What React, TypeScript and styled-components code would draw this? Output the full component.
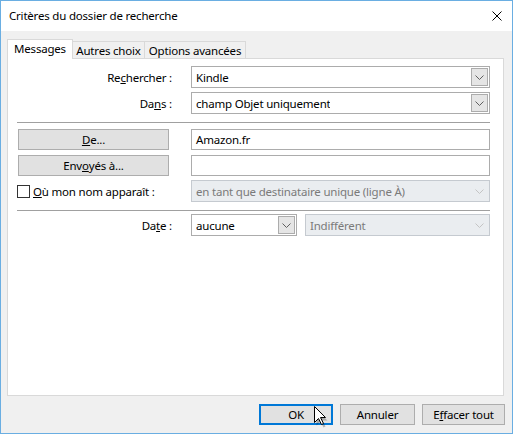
import styled, { createGlobalStyle } from "styled-components";

const GlobalStyle = createGlobalStyle`
  html, body {
    margin: 0;
    padding: 0;
    background: #ffffff;
  }
  * {
    box-sizing: border-box;
  }
`;

const Chevron = ({ color = "#5f5f5f" }: { color?: string }) => (
  <svg width="9" height="5" viewBox="0 0 9 5">
    <path d="M0.5 0.5 L4.5 4.5 L8.5 0.5" fill="none" stroke={color} strokeWidth="1" />
  </svg>
);

const Combo = ({ value, disabled, width }: { value: string; disabled?: boolean; width?: number }) => (
  <ComboBox $disabled={disabled} $width={width}>
    <ComboText>{value}</ComboText>
    <DropButton $disabled={disabled}>
      <Chevron color={disabled ? "#c4c4c4" : "#5f5f5f"} />
    </DropButton>
  </ComboBox>
);

const App = () => {
  return (
    <>
      <GlobalStyle />
      <Window>
        <TitleBar>
          <Title>Critères du dossier de recherche</Title>
          <CloseIcon width="10" height="10" viewBox="0 0 10 10">
            <path d="M0.5 0.5 L9.5 9.5 M9.5 0.5 L0.5 9.5" stroke="#000" strokeWidth="1" />
          </CloseIcon>
        </TitleBar>

        <Body>
          <TabStrip>
            <Tab $active $width={66}>Messages</Tab>
            <Tab $width={73}>Autres choix</Tab>
            <Tab $width={102}>Options avancées</Tab>
          </TabStrip>

          <Panel>
            <Form>
              <Row $height={22}>
                <Label>Re<u>c</u>hercher :</Label>
                <Combo value="Kindle" />
              </Row>
              <Row $top={4} $height={22}>
                <Label>Da<u>n</u>s :</Label>
                <Combo value="champ Objet uniquement" />
              </Row>

              <Separator $top={8} />

              <Row $top={5} $height={21}>
                <Cell>
                  <FieldButton><u>D</u>e...</FieldButton>
                </Cell>
                <TextBox>Amazon.fr</TextBox>
              </Row>
              <Row $top={5} $height={21}>
                <Cell>
                  <FieldButton>Env<u>o</u>yés à...</FieldButton>
                </Cell>
                <TextBox />
              </Row>
              <Row $top={5} $height={22}>
                <CheckLabel>
                  <CheckBox />
                  <span><u>O</u>ù mon nom apparaît :</span>
                </CheckLabel>
                <Combo value="en tant que destinataire unique (ligne À)" disabled />
              </Row>

              <Separator $top={8} />

              <Row $top={3} $height={21}>
                <Label>Da<u>t</u>e :</Label>
                <DateFields>
                  <Combo value="aucune" width={106} />
                  <Combo value="Indifférent" disabled />
                </DateFields>
              </Row>
            </Form>
          </Panel>

          <Footer>
            <DialogButton $default $width={74}>OK</DialogButton>
            <DialogButton $width={75}>Annuler</DialogButton>
            <DialogButton $width={83}>E<u>f</u>facer tout</DialogButton>
          </Footer>
        </Body>

        <Cursor width="14" height="22" viewBox="0 0 14 22">
          <path d="M2.5 3.5 L2.5 19.5 L6.5 15.5 L9.5 21.5 L11.5 20.5 L8.5 14.5 L13.5 14.5 Z" fill="rgba(0,0,0,0.25)" />
          <path d="M0.5 0.5 L0.5 16.5 L4.5 12.5 L7.5 18.5 L9.5 17.5 L6.5 11.5 L11.5 11.5 Z" fill="#fff" stroke="#000" strokeWidth="1" strokeLinejoin="miter" />
        </Cursor>
      </Window>
    </>
  );
};

export default App;

const Window = styled.div`
  position: relative;
  width: 513px;
  height: 434px;
  border: 1px solid #6aaee2;
  background: #f0f0f0;
  display: flex;
  flex-direction: column;
  font-family: "Noto Sans", "Open Sans", sans-serif;
  font-size: 11.5px;
  letter-spacing: -0.2px;
  color: #000;
  overflow: hidden;
`;

const TitleBar = styled.div`
  height: 30px;
  background: #ffffff;
  display: flex;
  align-items: center;
  justify-content: space-between;
  padding: 0 10px 1px 8px;
`;

const Title = styled.span`
  font-size: 11.5px;
`;

const CloseIcon = styled.svg`
  display: block;
`;

const Body = styled.div`
  flex: 1;
  display: flex;
  flex-direction: column;
  padding: 8px 8px 0 6px;
`;

const TabStrip = styled.div`
  display: flex;
  align-items: flex-end;
  height: 19px;
`;

const Tab = styled.div<{ $active?: boolean; $width: number }>`
  position: relative;
  width: ${(p) => p.$width}px;
  height: ${(p) => (p.$active ? "20px" : "17px")};
  margin-bottom: ${(p) => (p.$active ? "-1px" : "0")};
  margin-left: ${(p) => (p.$active ? "0" : "-1px")};
  z-index: ${(p) => (p.$active ? 2 : 1)};
  background: ${(p) => (p.$active ? "#ffffff" : "#f0f0f0")};
  border: 1px solid #d9d9d9;
  border-bottom: none;
  display: flex;
  align-items: center;
  justify-content: center;
  padding-bottom: ${(p) => (p.$active ? "2px" : "0")};
  white-space: nowrap;
`;

const Panel = styled.div`
  height: 338px;
  background: #ffffff;
  border: 1px solid #d9d9d9;
`;

const Form = styled.div`
  display: flex;
  flex-direction: column;
  padding: 7px 13px 0 9px;
`;

const Row = styled.div<{ $top?: number; $height: number }>`
  display: grid;
  grid-template-columns: 174px 1fr;
  align-items: center;
  height: ${(p) => p.$height}px;
  margin-top: ${(p) => p.$top ?? 0}px;
`;

const Label = styled.div`
  text-align: right;
  padding-right: 19px;
  white-space: nowrap;
`;

const Cell = styled.div`
  display: flex;
  padding-left: 1px;
`;

const Separator = styled.div<{ $top: number }>`
  height: 1px;
  background: #a0a0a0;
  margin-top: ${(p) => p.$top}px;
`;

const ComboBox = styled.div<{ $disabled?: boolean; $width?: number }>`
  display: flex;
  align-items: center;
  justify-content: space-between;
  height: 22px;
  width: ${(p) => (p.$width ? `${p.$width}px` : "auto")};
  flex: ${(p) => (p.$width ? "none" : "1")};
  border: 1px solid ${(p) => (p.$disabled ? "#c5cad0" : "#acacac")};
  background: ${(p) => (p.$disabled ? "#eaedf0" : "#ffffff")};
  color: ${(p) => (p.$disabled ? "#7a7a7a" : "#000000")};
  padding: 0 1px 0 4px;
`;

const ComboText = styled.span`
  white-space: nowrap;
  overflow: hidden;
`;

const DropButton = styled.div<{ $disabled?: boolean }>`
  width: 17px;
  height: 18px;
  display: flex;
  align-items: center;
  justify-content: center;
  border: 1px solid ${(p) => (p.$disabled ? "transparent" : "#acacac")};
  background: ${(p) => (p.$disabled ? "transparent" : "#e5e5e5")};
`;

const TextBox = styled.div`
  height: 21px;
  border: 1px solid #acacac;
  background: #ffffff;
  display: flex;
  align-items: center;
  padding-left: 4px;
`;

const FieldButton = styled.div`
  width: 151px;
  height: 21px;
  border: 1px solid #adadad;
  background: #e1e1e1;
  display: flex;
  align-items: center;
  justify-content: center;
  margin-top: 1px;
`;

const CheckLabel = styled.label`
  display: flex;
  align-items: center;
  gap: 3px;
  white-space: nowrap;
`;

const CheckBox = styled.span`
  width: 13px;
  height: 13px;
  border: 1px solid #333333;
  background: #ffffff;
  display: inline-block;
`;

const DateFields = styled.div`
  display: flex;
  gap: 8px;
`;

const Footer = styled.div`
  display: flex;
  justify-content: flex-end;
  gap: 7px;
  padding: 8px 0 0 0;
  margin-right: -1px;
`;

const DialogButton = styled.div<{ $default?: boolean; $width: number }>`
  width: ${(p) => p.$width}px;
  height: 21px;
  border: ${(p) => (p.$default ? "2px solid #0078d7" : "1px solid #adadad")};
  background: #e1e1e1;
  display: flex;
  align-items: center;
  justify-content: center;
`;

const Cursor = styled.svg`
  position: absolute;
  left: 313px;
  top: 405px;
  pointer-events: none;
`;
